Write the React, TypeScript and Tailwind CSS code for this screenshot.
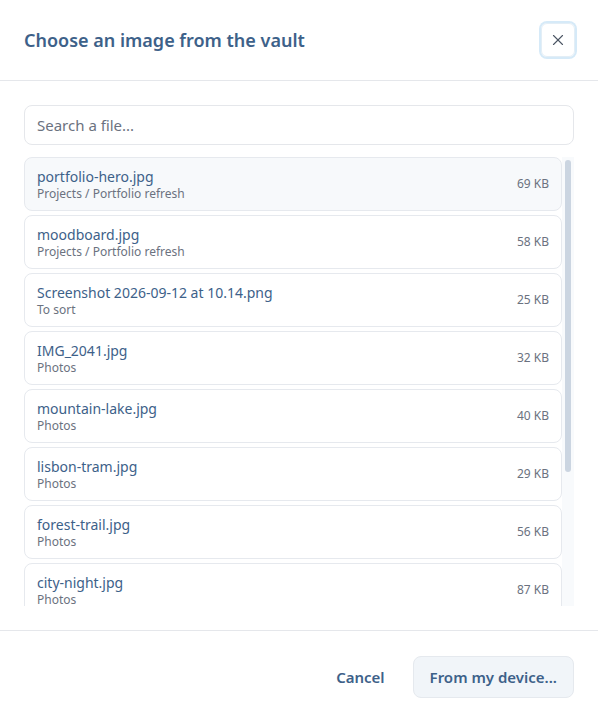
import { X } from "lucide-react";

type VaultFile = {
  name: string;
  folder: string;
  size: string;
};

const files: VaultFile[] = [
  { name: "portfolio-hero.jpg", folder: "Projects / Portfolio refresh", size: "69 KB" },
  { name: "moodboard.jpg", folder: "Projects / Portfolio refresh", size: "58 KB" },
  { name: "Screenshot 2026-09-12 at 10.14.png", folder: "To sort", size: "25 KB" },
  { name: "IMG_2041.jpg", folder: "Photos", size: "32 KB" },
  { name: "mountain-lake.jpg", folder: "Photos", size: "40 KB" },
  { name: "lisbon-tram.jpg", folder: "Photos", size: "29 KB" },
  { name: "forest-trail.jpg", folder: "Photos", size: "56 KB" },
  { name: "city-night.jpg", folder: "Photos", size: "87 KB" },
  { name: "beach-sunset.jpg", folder: "Photos", size: "64 KB" },
  { name: "logo-draft.png", folder: "Projects / Branding", size: "12 KB" },
  { name: "invoice-scan.png", folder: "To sort", size: "48 KB" },
];

const FileRow = ({ file, active }: { file: VaultFile; active?: boolean }) => (
  <button
    className={`flex w-full shrink-0 items-center justify-between rounded-lg border border-[#e6e9ee] px-3 py-2 text-left ${
      active ? "bg-[#f7f9fb]" : "bg-white hover:bg-[#f7f9fb]"
    }`}
  >
    <div className="flex flex-col pt-px">
      <span className="text-[14px] leading-5 text-[#3d6189]">{file.name}</span>
      <span className="-mt-px text-[12px] leading-4 text-[#6b7280]">{file.folder}</span>
    </div>
    <span className="text-[12px] text-[#6b7280]">{file.size}</span>
  </button>
);

export default function App() {
  return (
    <div className="flex h-[722px] w-[598px] flex-col bg-white font-['Noto_Sans',sans-serif]">
      <header className="flex h-[81px] shrink-0 items-center justify-between border-b border-[#e5e7eb] pl-6 pr-[23px]">
        <h2 className="text-[18px] font-semibold text-[#3d6189]">
          Choose an image from the vault
        </h2>
        <button
          aria-label="Close"
          className="flex h-[34px] w-[34px] items-center justify-center rounded-md border border-[#e3eef6] text-[#4b5563] ring-2 ring-[#d6eaf8]"
        >
          <X size={18} strokeWidth={1.5} />
        </button>
      </header>

      <div className="flex min-h-0 flex-1 flex-col px-6 pb-6 pt-6">
        <input
          type="text"
          placeholder="Search a file..."
          className="h-10 w-full shrink-0 rounded-lg border border-[#e5e7eb] px-3 text-[15px] text-[#374151] outline-none placeholder:text-[#6b7280]"
        />
        <div className="mt-3 flex min-h-0 flex-1">
          <div className="flex flex-1 flex-col gap-1 overflow-y-auto [scrollbar-width:none]">
            {files.map((file, i) => (
              <FileRow key={file.name} file={file} active={i === 0} />
            ))}
          </div>
          {/* scroll track */}
          <div className="w-3 shrink-0 bg-[#f8fafc] p-[3px]">
            <div className="h-[312px] rounded-full bg-[#cbd5e1]" />
          </div>
        </div>
      </div>

      <footer className="flex shrink-0 items-center justify-end gap-3 border-t border-[#e5e7eb] px-6 pb-6 pt-[25px]">
        <button className="px-4 py-[10px] text-[15px] font-semibold leading-5 text-[#3d6189]">
          Cancel
        </button>
        <button className="rounded-lg border border-[#e5e9ee] bg-[#f1f5f9] px-4 py-[10px] text-[15px] font-semibold leading-5 text-[#3d6189]">
          From my device...
        </button>
      </footer>
    </div>
  );
}
